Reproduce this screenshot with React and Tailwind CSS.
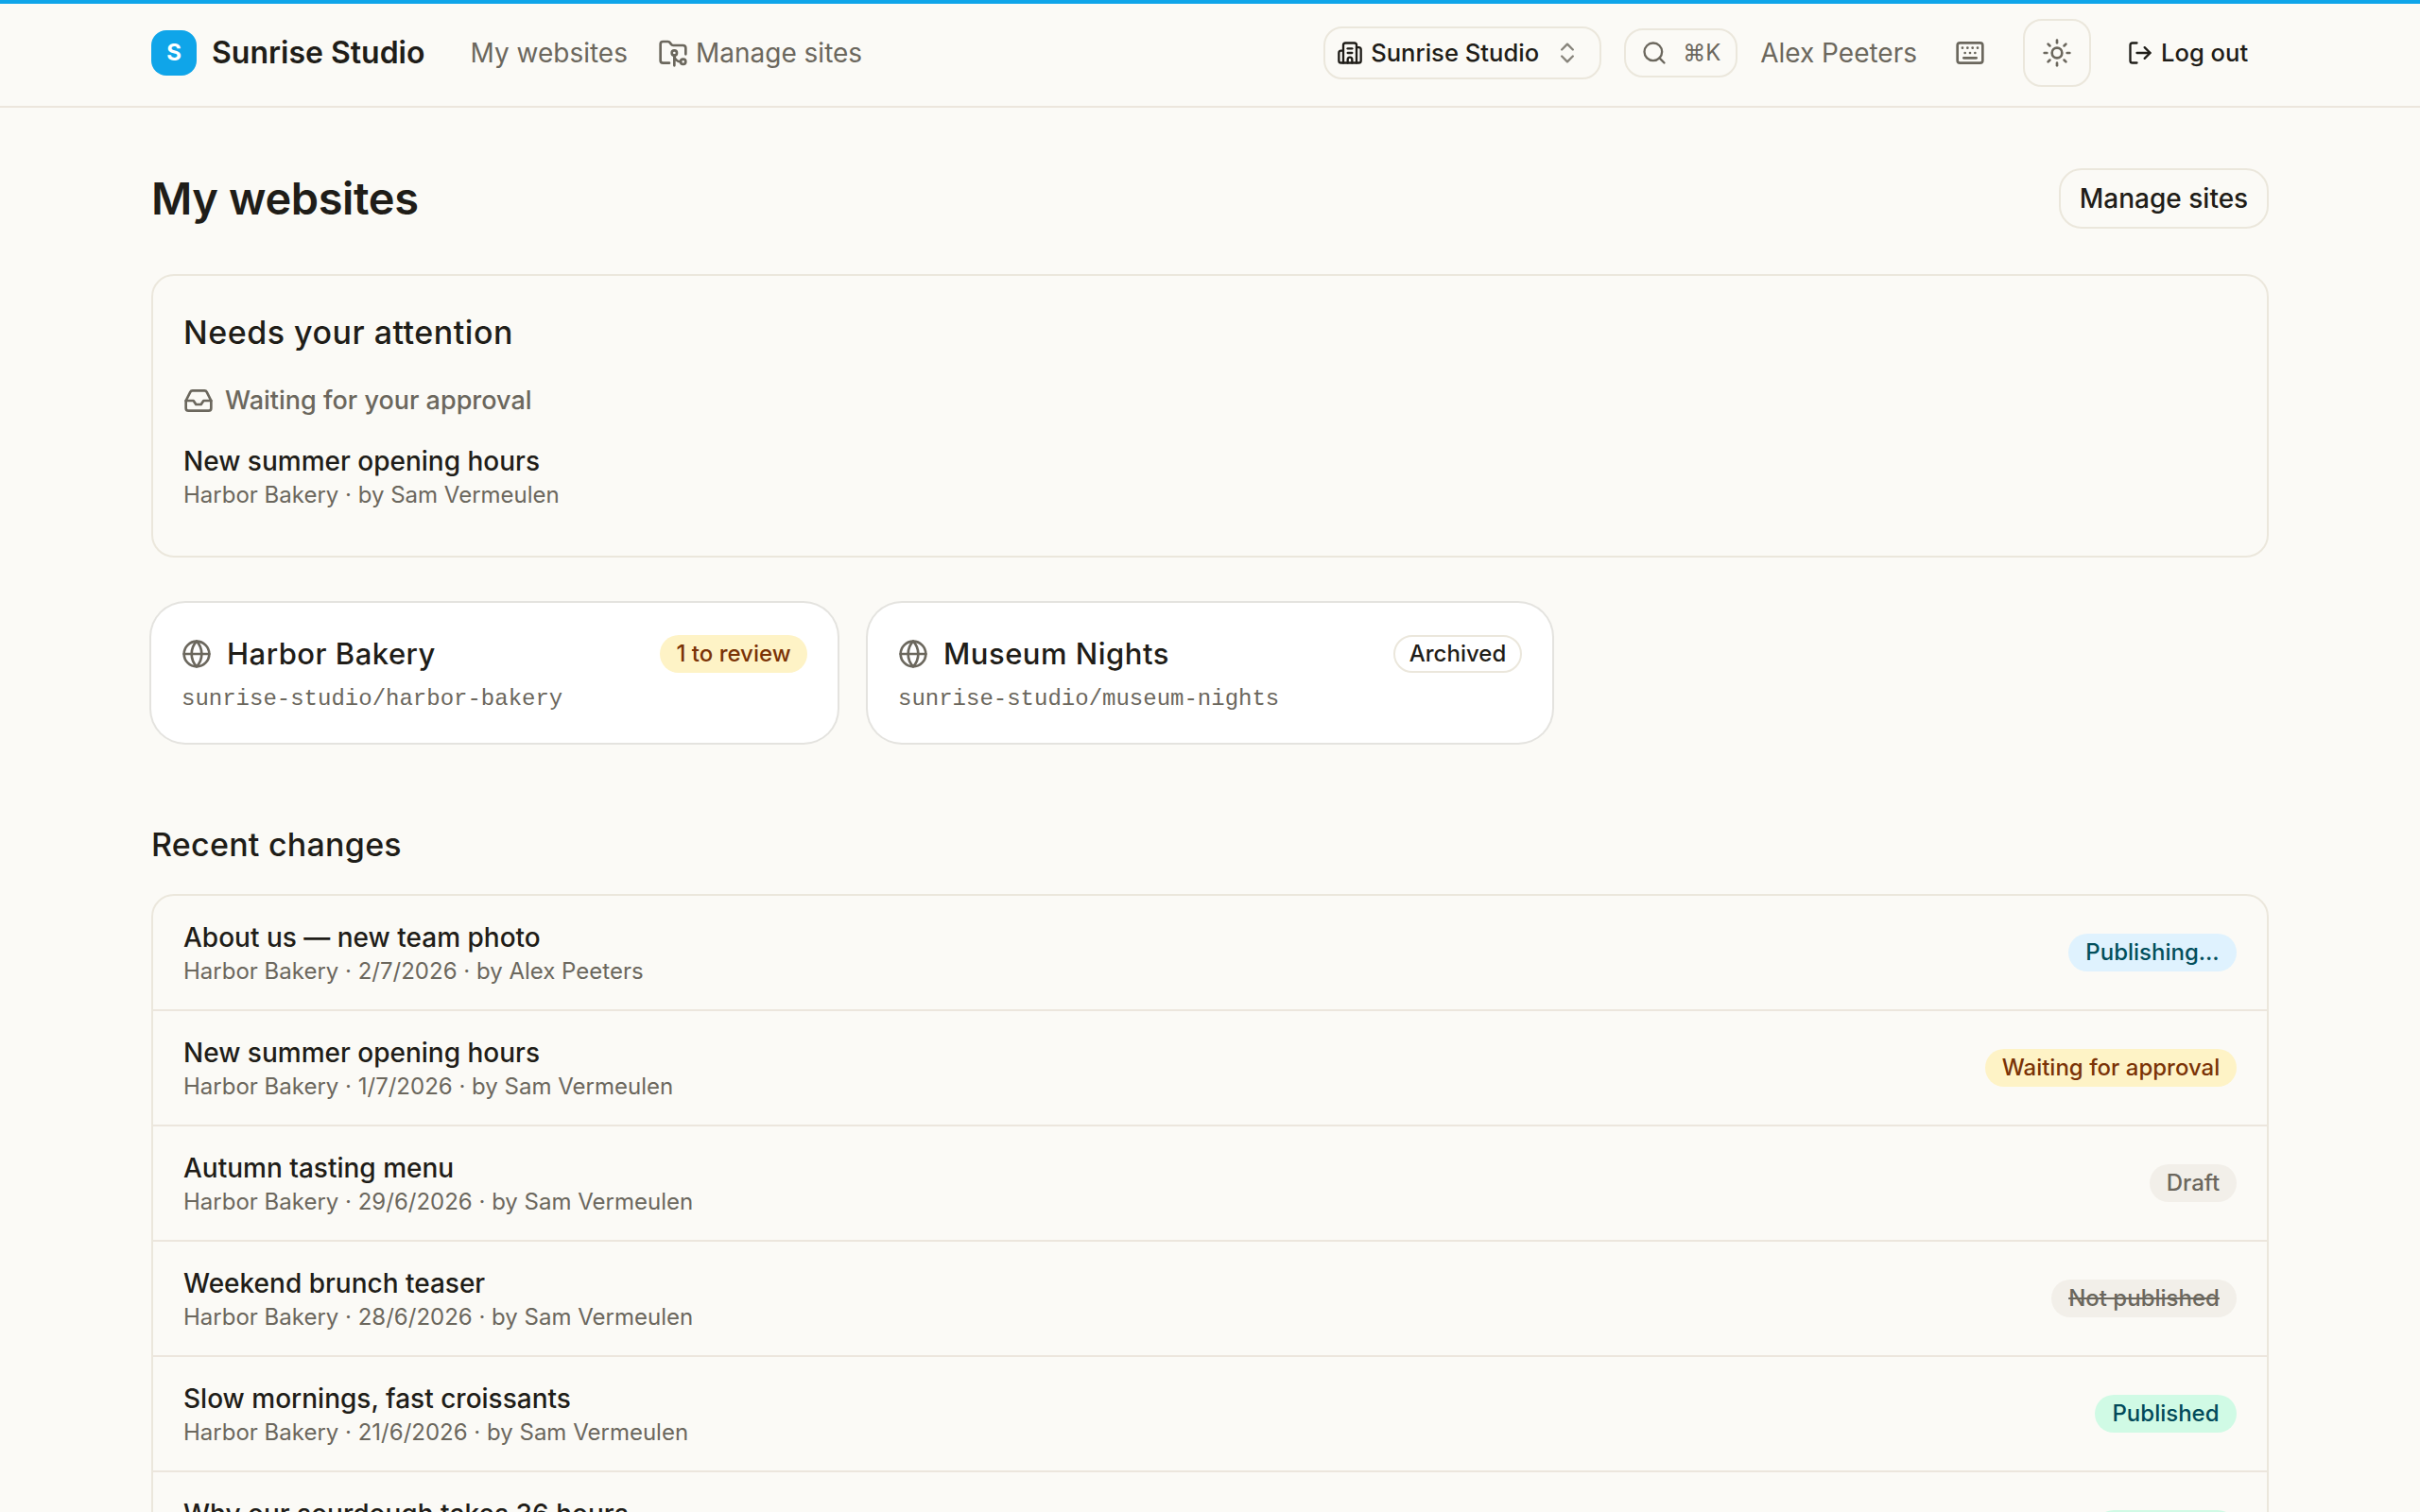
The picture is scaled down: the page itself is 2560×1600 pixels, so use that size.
import {
  Building2,
  ChevronsUpDown,
  FolderGit2,
  Globe,
  Inbox,
  Keyboard,
  LogOut,
  Search,
  Sun,
} from 'lucide-react';
import clsx from 'clsx';

const badgeStyles = {
  info: 'bg-[#dff2fe] text-[#024f5c]',
  warning: 'bg-[#fef3c6] text-[#7b3306]',
  muted: 'bg-[#f2efe9] text-[#6b675d]',
  rejected: 'bg-[#f2efe9] text-[#6b675d] line-through',
  success: 'bg-[#d0fae5] text-[#024a5a]',
  outline: 'border-2 border-[#ebe7dc] text-[#1f1d18]',
};

const sites = [
  {
    name: 'Harbor Bakery',
    slug: 'sunrise-studio/harbor-bakery',
    badge: '1 to review',
    variant: 'warning',
    width: 'w-[156px]',
  },
  {
    name: 'Museum Nights',
    slug: 'sunrise-studio/museum-nights',
    badge: 'Archived',
    variant: 'outline',
    width: 'w-[136px]',
  },
];

const changes = [
  { title: 'About us — new team photo', date: '2/7/2026', author: 'Alex Peeters', status: 'Publishing…', variant: 'info', width: 'w-[178px]' },
  { title: 'New summer opening hours', date: '1/7/2026', author: 'Sam Vermeulen', status: 'Waiting for approval', variant: 'warning', width: 'w-[266px]' },
  { title: 'Autumn tasting menu', date: '29/6/2026', author: 'Sam Vermeulen', status: 'Draft', variant: 'muted', width: 'w-[92px]' },
  { title: 'Weekend brunch teaser', date: '28/6/2026', author: 'Sam Vermeulen', status: 'Not published', variant: 'rejected', width: 'w-[196px]' },
  { title: 'Slow mornings, fast croissants', date: '21/6/2026', author: 'Sam Vermeulen', status: 'Published', variant: 'success', width: 'w-[150px]' },
  { title: 'Why our sourdough takes 36 hours', date: '14/6/2026', author: 'Sam Vermeulen', status: 'Published', variant: 'success', width: 'w-[150px]' },
];

function Badge({ variant, className, children }) {
  return (
    <span
      className={clsx(
        'inline-flex h-10 shrink-0 items-center justify-center rounded-full text-2xl font-medium whitespace-nowrap',
        badgeStyles[variant],
        className
      )}
    >
      {children}
    </span>
  );
}

function Header() {
  return (
    <header className="h-[114px] border-b-2 border-[#ece6dd]">
      <div className="mx-auto flex h-full w-[2240px] items-center">
        <div className="flex items-center">
          <div className="flex size-12 items-center justify-center rounded-[16px] bg-[#0fa5e9] text-2xl font-bold text-white">
            S
          </div>
          <span className="ml-4 text-[32px] font-semibold">Sunrise Studio</span>
        </div>
        <nav className="ml-12 flex items-center gap-8 text-[28px] text-[#6b675d]">
          <a href="#">My websites</a>
          <a href="#" className="flex items-center gap-2">
            <FolderGit2 size={32} />
            Manage sites
          </a>
        </nav>

        <div className="ml-auto flex items-center">
          <button className="flex h-14 w-[294px] items-center rounded-[20px] border-2 border-[#ebe7dc] pl-3 text-[25.6px] font-medium">
            <Building2 size={28} />
            <span className="ml-2">Sunrise Studio</span>
            <ChevronsUpDown size={28} className="mr-5 ml-auto text-[#6b675d] opacity-80" />
          </button>
          <button className="ml-6 flex h-[52px] w-[120px] items-center rounded-[20px] border-2 border-[#ebe7dc] pl-4 text-2xl text-[#6b675d]">
            <Search size={28} />
            <span className="ml-4">⌘K</span>
          </button>
          <span className="ml-6 text-[28px] text-[#6b675d]">Alex Peeters</span>
          <button className="ml-6 flex h-14 w-16 items-center justify-center text-[#6b675d]">
            <Keyboard size={32} />
          </button>
          <button className="ml-6 flex size-[72px] items-center justify-center rounded-[20px] border-2 border-[#ebe7dc] text-[#6b675d]">
            <Sun size={32} />
          </button>
          <button className="ml-6 flex h-14 w-[164px] items-center pl-3.5 text-[25.6px] font-medium">
            <LogOut size={28} />
            <span className="ml-2">Log out</span>
          </button>
        </div>
      </div>
    </header>
  );
}

export default function App() {
  return (
    <div
      className="relative h-[1600px] overflow-hidden bg-[#fbfaf6] text-[#1f1d18]"
      style={{ fontFamily: 'Inter, "DejaVu Sans", sans-serif' }}
    >
      <div className="absolute inset-x-0 top-0 h-1 bg-[#0fa5e9]" />
      <Header />

      <main className="mx-auto w-[2240px] pt-16">
        <div className="flex h-16 items-center justify-between">
          <h1 className="text-[47px] font-semibold tracking-[-0.4px]">My websites</h1>
          <button className="flex h-16 w-[222px] items-center justify-center rounded-[24px] border-2 border-[#ebe7dc] text-[28px] font-medium">
            Manage sites
          </button>
        </div>

        <section className="mt-12 rounded-[24px] border-2 border-[#ebe7dc] px-8 pt-8 pb-12">
          <h2 className="text-[34px] leading-[56px] font-medium tracking-[0.5px]">Needs your attention</h2>
          <h3 className="mt-6 flex h-10 items-center gap-3 text-[27px] font-medium text-[#6b675d]">
            <Inbox size={32} />
            Waiting for your approval
          </h3>
          <div className="mt-6 text-[28px] leading-10 font-medium">New summer opening hours</div>
          <div className="text-2xl leading-8 text-[#6b675d]">Harbor Bakery · by Sam Vermeulen</div>
        </section>

        <div className="mt-12 grid grid-cols-[726px_724px] gap-8">
          {sites.map((site) => (
            <div key={site.slug} className="h-[148px] rounded-[36px] bg-white px-8 pt-8 ring-2 ring-[#e4e3df]">
              <div className="flex h-11 items-center">
                <Globe size={32} className="text-[#6b675d]" />
                <span className="ml-4 text-[31px] font-medium tracking-[0.5px]">{site.name}</span>
                <Badge variant={site.variant} className={clsx('ml-auto', site.width)}>
                  {site.badge}
                </Badge>
              </div>
              <div
                className="mt-2.5 text-2xl leading-8 text-[#6b675d]"
                style={{ fontFamily: '"Liberation Mono", monospace' }}
              >
                {site.slug}
              </div>
            </div>
          ))}
        </div>

        <h2 className="mt-20 text-[34px] leading-[56px] font-medium tracking-[0.25px]">Recent changes</h2>
        <ul className="mt-6 divide-y-2 divide-[#ece6dd] rounded-[24px] border-2 border-[#ebe7dc]">
          {changes.map((change) => (
            <li key={change.title} className="flex items-center justify-between px-8 py-6">
              <div>
                <div className="text-[28px] leading-10 font-medium">{change.title}</div>
                <div className="text-2xl leading-8 text-[#6b675d]">
                  Harbor Bakery · {change.date} · by {change.author}
                </div>
              </div>
              <Badge variant={change.variant} className={change.width}>
                {change.status}
              </Badge>
            </li>
          ))}
        </ul>
      </main>
    </div>
  );
}
